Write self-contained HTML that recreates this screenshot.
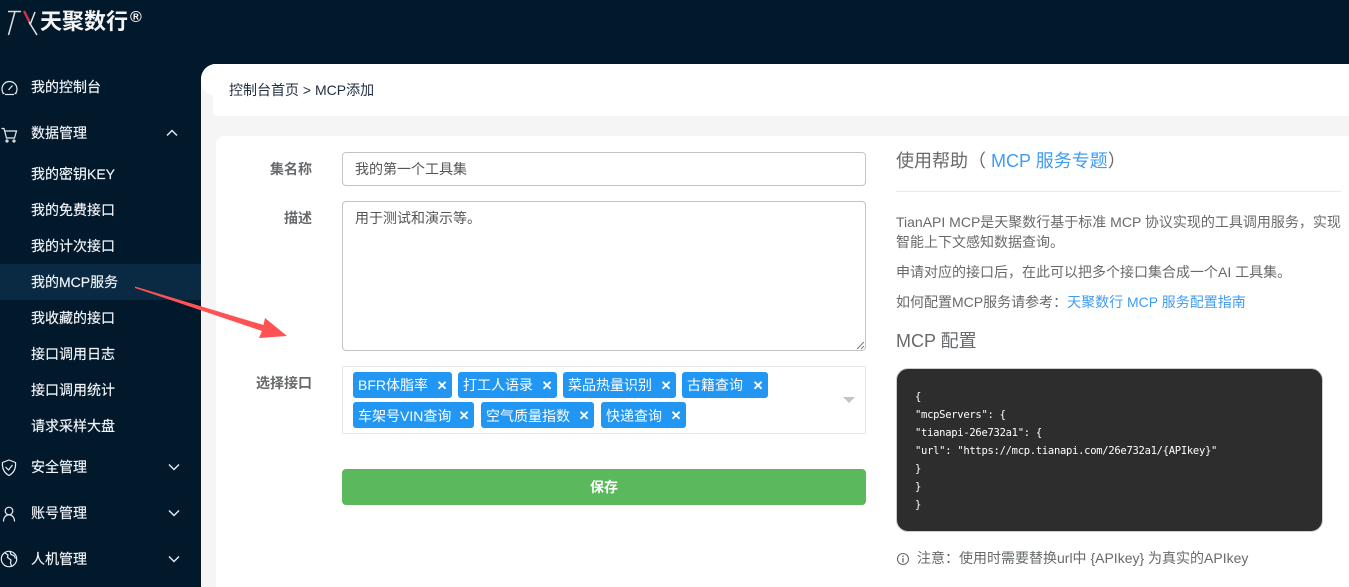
<!DOCTYPE html>
<html lang="zh-CN"><head><meta charset="utf-8"><title>MCP添加</title>
<style>
*{box-sizing:border-box}
html,body{margin:0;padding:0}
body{width:1349px;height:587px;position:relative;overflow:hidden;background:#02192c;font-family:"Liberation Sans","Noto Sans CJK SC",sans-serif;font-size:14px;color:#676a6c}
.a{position:absolute;white-space:nowrap}
.nav{position:absolute;left:31px;color:#f2f6fa;font-size:14px;line-height:20px;white-space:nowrap;-webkit-text-stroke:.15px #f2f6fa}
.ic{position:absolute;left:0;width:20px;height:20px;fill:none;stroke:#e8eef3;stroke-width:1.2}
.ch{position:absolute;left:168px;width:12px;height:8px;fill:none;stroke:#dfe6ec;stroke-width:1.5}
.tag{position:absolute;height:26px;background:#2196f3;color:#fff;border-radius:3px;line-height:27px;padding-left:5px;font-size:14px;white-space:nowrap}
.tag i{position:absolute;right:4.500px;top:0;font-style:normal;font-weight:bold;font-size:13px}
.r2{line-height:28px}
.lab{position:absolute;font-weight:bold;color:#676a6c;white-space:nowrap;text-align:right;width:120px;left:192px}
.code{position:absolute;left:915px;color:#fff;font:10.500px/18px "DejaVu Sans Mono","Liberation Mono",monospace;letter-spacing:-.28px;white-space:nowrap}
</style></head><body>
<svg class="a" style="left:0;top:0" width="44" height="40" viewBox="0 0 44 40"><path d="M8 11.500H21M15 11.500L8.500 35" fill="none" stroke="#dcdcdc" stroke-width="1.500"/><path d="M24 11L29.500 22" stroke="#d9333f" stroke-width="2.400"/><path d="M29 22L37 35M35 12L30 25" stroke="#e4e4e4" stroke-width="1.500" fill="none"/></svg>
<div class="a" style="left:40px;top:9px;font-size:22px;line-height:26px;font-weight:bold;color:#f4f4f4">天聚数行</div>
<div class="a" style="left:130px;top:9px;font-size:16px;line-height:18px;font-weight:bold;color:#f4f4f4">®</div>

<svg class="ic" style="top:78px" viewBox="0 0 20 20"><path d="M3.500 15.500A7.500 7.500 0 1 1 15.500 15.500"/><path d="M5 16.500H14"/><path d="M8.500 12L12.500 7.500"/><path d="M2.500 15.500H4.500M14.500 15.500H16.500"/></svg>
<div class="nav" style="top:77px">我的控制台</div>
<svg class="ic" style="top:125px" viewBox="0 0 20 20"><path d="M1.500 3.500H4L6.500 13H14.500L16.500 6H4.700"/><circle cx="7" cy="16" r="1"/><circle cx="14" cy="16" r="1"/></svg>
<div class="nav" style="top:123px">数据管理</div>
<svg class="ch" style="top:129px;left:166px" viewBox="0 0 12 8"><path d="M1 6.500L6 1.500L11 6.500"/></svg>

<div class="a" style="left:0;top:264px;width:201px;height:36px;background:#0a2942"></div>
<div class="nav" style="top:164px">我的密钥KEY</div>
<div class="nav" style="top:200px">我的免费接口</div>
<div class="nav" style="top:236px">我的计次接口</div>
<div class="nav" style="top:272px">我的MCP服务</div>
<div class="nav" style="top:308px">我收藏的接口</div>
<div class="nav" style="top:344px">接口调用日志</div>
<div class="nav" style="top:380px">接口调用统计</div>
<div class="nav" style="top:416px">请求采样大盘</div>

<svg class="ic" style="top:458px" viewBox="0 0 20 20"><path d="M9 2L15.500 4.500C16 10 14.500 14.500 9 17.500C3.500 14.500 2 10 2.500 4.500Z"/><path d="M5.500 9L8.500 12L12.500 7"/></svg>
<div class="nav" style="top:457px">安全管理</div>
<svg class="ch" style="top:463px" viewBox="0 0 12 8"><path d="M1 1.500L6 6.500L11 1.500"/></svg>
<svg class="ic" style="top:504px" viewBox="0 0 20 20"><circle cx="9" cy="7" r="3.800"/><path d="M3.500 17.500C3.500 8.500 14.500 8.500 14.500 17.500"/></svg>
<div class="nav" style="top:503px">账号管理</div>
<svg class="ch" style="top:509px" viewBox="0 0 12 8"><path d="M1 1.500L6 6.500L11 1.500"/></svg>
<svg class="ic" style="top:549px" viewBox="0 0 20 20"><circle cx="9" cy="10" r="7.700"/><path d="M5 4L8 6L7.500 8.500L11 11L10.500 14L11.500 17M10 2.500L11 5.500L14 6.500L15.500 9.500"/></svg>
<div class="nav" style="top:549px">人机管理</div>
<svg class="ch" style="top:555px" viewBox="0 0 12 8"><path d="M1 1.500L6 6.500L11 1.500"/></svg>

<div class="a" style="left:201px;top:64px;width:1148px;height:523px;background:#f5f5f5;border-radius:15px 0 0 0"></div>
<div class="a" style="left:201px;top:64px;width:1148px;height:32px;background:#fff;border-radius:15px 0 0 15px"></div>
<div class="a" style="left:213px;top:64px;width:1136px;height:52px;background:#fff;border-radius:0 0 0 5px"></div>
<div class="a" style="left:229px;top:80px;font-size:14px;line-height:20px;color:#1f2d3d">控制台首页 &gt; MCP添加</div>
<div class="a" style="left:216px;top:136px;width:1133px;height:451px;background:#fff;border-radius:8px 0 0 0"></div>

<div class="lab" style="top:159px">集名称</div>
<div class="a" style="left:342px;top:152px;width:524px;height:34px;border:1px solid #c4c4c4;border-radius:4px;padding-left:12px;line-height:32px;color:#555">我的第一个工具集</div>
<div class="lab" style="top:208px">描述</div>
<div class="a" style="left:342px;top:201px;width:524px;height:150px;border:1px solid #c4c4c4;border-radius:4px;padding:6px 12px;line-height:20px;color:#555">用于测试和演示等。</div>
<svg class="a" style="left:855px;top:340px" width="10" height="10" viewBox="0 0 10 10"><path d="M2 9L9 2M6 9L9 6" stroke="#777" stroke-width="1"/></svg>
<div class="lab" style="top:373px">选择接口</div>
<div class="a" style="left:342px;top:366px;width:524px;height:68px;border:1px solid #e5e6e7;border-radius:2px"></div>
<div class="tag" style="left:353px;top:372px;width:99px">BFR体脂率<i>✕</i></div>
<div class="tag" style="left:458px;top:372px;width:99px">打工人语录<i>✕</i></div>
<div class="tag" style="left:563px;top:372px;width:113px">菜品热量识别<i>✕</i></div>
<div class="tag" style="left:682px;top:372px;width:86px">古籍查询<i>✕</i></div>
<div class="tag r2" style="left:353px;top:402px;width:121px">车架号VIN查询<i>✕</i></div>
<div class="tag r2" style="left:481px;top:402px;width:113px">空气质量指数<i>✕</i></div>
<div class="tag r2" style="left:601px;top:402px;width:85px">快递查询<i>✕</i></div>
<div class="a" style="left:843px;top:397px;border-left:6px solid transparent;border-right:6px solid transparent;border-top:6px solid #c4c4c4"></div>
<div class="a" style="left:342px;top:469px;width:524px;height:36px;background:#5cb85c;border-radius:4px;color:#fff;font-weight:bold;text-align:center;line-height:36px">保存</div>

<div class="a" style="left:896px;top:150px;font-size:18px;line-height:22px;color:#676a6c">使用帮助（ <span style="color:#3f9cf3">MCP 服务专题</span>）</div>
<div class="a" style="left:896px;top:191px;width:445px;height:1px;background:#eaeaea"></div>
<div class="a" style="left:896px;top:212px;line-height:20px;color:#676a6c">TianAPI MCP是天聚数行基于标准 MCP 协议实现的工具调用服务，实现</div>
<div class="a" style="left:896px;top:232px;line-height:20px">智能上下文感知数据查询。</div>
<div class="a" style="left:896px;top:262px;line-height:20px">申请对应的接口后，在此可以把多个接口集合成一个AI 工具集。</div>
<div class="a" style="left:896px;top:292px;line-height:20px">如何配置MCP服务请参考：<span style="color:#3f9cf3">天聚数行 MCP 服务配置指南</span></div>
<div class="a" style="left:896px;top:330px;font-size:18px;line-height:22px">MCP 配置</div>
<div class="a" style="left:896px;top:368px;width:427px;height:164px;background:#2d2d2d;border:1px solid #ccc;border-radius:12px"></div>
<div class="code" style="top:388px">{</div>
<div class="code" style="top:406px">"mcpServers": {</div>
<div class="code" style="top:424px">"tianapi-26e732a1": {</div>
<div class="code" style="top:442px">"url": "https://mcp.tianapi.com/26e732a1/{APIkey}"</div>
<div class="code" style="top:460px">}</div>
<div class="code" style="top:478px">}</div>
<div class="code" style="top:496px">}</div>
<svg class="a" style="left:896px;top:552px" width="14" height="14" viewBox="0 0 14 14"><circle cx="7" cy="7" r="5.500" fill="none" stroke="#676a6c" stroke-width="1.100"/><path d="M7 6V10.500M7 3.500V5" stroke="#676a6c" stroke-width="1.300"/></svg>
<div class="a" style="left:917px;top:548px;line-height:20px">注意：使用时需要替换url中 {APIkey} 为真实的APIkey</div>

<svg class="a" style="left:0;top:0" width="1349" height="587" viewBox="0 0 1349 587"><path d="M135 286.500L263.500 325L265 318L287 336L259 338L262 331L135 288Z" fill="#ff5252"/></svg>
</body></html>
